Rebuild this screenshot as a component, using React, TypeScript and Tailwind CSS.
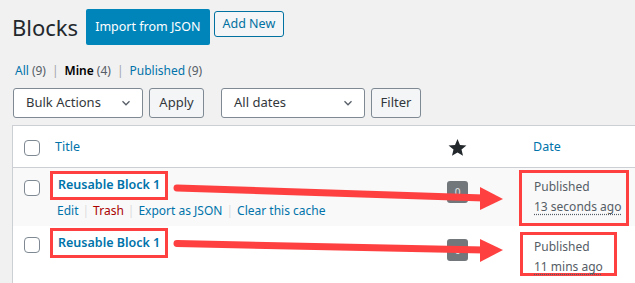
import React from "react";

const Chevron = () => (
  <svg width="14" height="14" viewBox="0 0 20 20" className="text-[#555d66]">
    <path d="M5 7.5l5 5 5-5" fill="none" stroke="currentColor" strokeWidth="1.8" />
  </svg>
);

const Checkbox = () => (
  <div className="w-4 h-4 border border-[#7e8993] rounded-[4px] bg-white" />
);

const Star = () => (
  <svg width="19" height="19" viewBox="0 0 20 20">
    <path
      d="M10 1l2.6 6.3 6.8.5-5.2 4.4 1.6 6.6L10 15.2l-5.8 3.6 1.6-6.6L.6 7.8l6.8-.5z"
      fill="#23282d"
    />
  </svg>
);

const Badge = () => (
  <div className="w-[21px] h-[22px] rounded-[3px] bg-[#72777c] text-[#e5e5e5] text-[10px] flex items-center justify-center">
    0
  </div>
);

export default function App() {
  return (
    <div
      className="relative w-[635px] h-[283px] overflow-hidden bg-[#f1f1f1] text-[#23282d]"
      style={{ fontFamily: '"Noto Sans", "Open Sans", sans-serif' }}
    >
      {/* heading */}
      <div className="flex items-start pl-[12px] pt-[9px]">
        <h1 className="text-[22px] leading-[32px] mt-[2px] text-[#23282d]">Blocks</h1>
        <div className="ml-[8px] h-[36px] px-[9px] flex items-center bg-[#0085ba] text-white text-[12.5px] rounded-[2px]">
          Import from JSON
        </div>
        <div className="ml-[4px] mt-[2px] h-[26px] px-[8px] flex items-center border border-[#0071a1] bg-[#f3f5f6] text-[#0071a1] text-[12.5px] rounded-[3px]">
          Add New
        </div>
      </div>

      {/* subsubsub */}
      <div className="flex items-center pl-[15px] mt-[17px] h-[18px] text-[12px] leading-[18px]">
        <span className="text-[#0073aa]">All</span>
        <span className="text-[#555d66] ml-[3px]">(9)</span>
        <span className="text-[#a0a5aa] mx-[6px]">|</span>
        <span className="font-semibold text-black">Mine</span>
        <span className="text-[#555d66] ml-[3px]">(4)</span>
        <span className="text-[#a0a5aa] mx-[6px]">|</span>
        <span className="text-[#0073aa]">Published</span>
        <span className="text-[#555d66] ml-[3px]">(9)</span>
      </div>

      {/* tablenav */}
      <div className="flex items-center pl-[13px] mt-[8px] h-[30px] text-[13px] text-[#32373c]">
        <div className="w-[130px] h-[30px] bg-white border border-[#7e8993] rounded-[3px] flex items-center justify-between pl-[12px] pr-[9px]">
          <span>Bulk Actions</span>
          <Chevron />
        </div>
        <div className="ml-[6px] w-[55px] h-[30px] bg-[#f3f5f6] border border-[#7e8993] rounded-[3px] flex items-center justify-center">
          Apply
        </div>
        <div className="ml-[17px] w-[144px] h-[30px] bg-white border border-[#7e8993] rounded-[3px] flex items-center justify-between pl-[12px] pr-[9px]">
          <span>All dates</span>
          <Chevron />
        </div>
        <div className="ml-[6px] w-[50px] h-[30px] bg-[#f3f5f6] border border-[#7e8993] rounded-[3px] flex items-center justify-center">
          Filter
        </div>
      </div>

      {/* table */}
      <div className="ml-[12px] mt-[7px] w-[640px] border border-[#ccd0d4] bg-white text-[12.5px]">
        {/* header */}
        <div className="grid grid-cols-[34px_363px_95px_1fr] h-[42px] pt-[2px] items-center border-b border-[#ccd0d4]">
          <div className="pl-[11px]">
            <Checkbox />
          </div>
          <div className="pl-[8px] text-[#0073aa]">Title</div>
          <div className="flex justify-center">
            <Star />
          </div>
          <div className="pl-[28px] text-[#0073aa]">Date</div>
        </div>

        {/* row 1 */}
        <div className="grid grid-cols-[34px_363px_95px_1fr] h-[58px] bg-[#f9f9f9] items-start">
          <div className="pl-[11px] pt-[12px]">
            <Checkbox />
          </div>
          <div className="pt-[3px] pl-[3px]">
            <div className="inline-flex h-[29px] items-center border-[3px] border-[#ff4040] px-[5px] bg-white font-semibold text-[#0073aa]">
              Reusable Block 1
            </div>
            <div className="flex items-center h-[18px] mt-[2px] pl-[7px] text-[12px] text-[#0073aa]">
              <span>Edit</span>
              <span className="text-[#ddd] mx-[4px]">|</span>
              <span className="text-[#a00]">Trash</span>
              <span className="text-[#ddd] mx-[4px]">|</span>
              <span>Export as JSON</span>
              <span className="text-[#ddd] mx-[4px]">|</span>
              <span>Clear this cache</span>
            </div>
          </div>
          <div className="flex justify-center pt-[13px]">
            <Badge />
          </div>
          <div className="pt-[2px] pl-[14px]">
            <div className="w-[110px] h-[56px] border-[3px] border-[#ff4040] pl-[12px] pt-[4px] text-[#555d66] text-[12px] leading-[20px] bg-[#f9f9f9]">
              <div>Published</div>
              <div className="underline decoration-dotted underline-offset-[3px] whitespace-nowrap">13 seconds ago</div>
            </div>
          </div>
        </div>

        {/* row 2 */}
        <div className="grid grid-cols-[34px_363px_95px_1fr] h-[60px] bg-white items-start">
          <div className="pl-[11px] pt-[11px]">
            <Checkbox />
          </div>
          <div className="pt-[2px] pl-[3px]">
            <div className="inline-flex h-[30px] items-center border-[3px] border-[#ff4040] px-[5px] font-semibold text-[#0073aa]">
              Reusable Block 1
            </div>
          </div>
          <div className="flex justify-center pt-[13px]">
            <Badge />
          </div>
          <div className="pt-[6px] pl-[15px]">
            <div className="w-[97px] h-[44px] border-[3px] border-[#ff4040] pl-[11px] pt-[2px] text-[#555d66] text-[12px] leading-[20px]">
              <div>Published</div>
              <div className="underline decoration-dotted underline-offset-[3px] whitespace-nowrap">11 mins ago</div>
            </div>
          </div>
        </div>
      </div>

      {/* annotation arrows */}
      <svg className="absolute inset-0 pointer-events-none" width="635" height="283">
        <line x1="177" y1="188" x2="484" y2="198" stroke="#ff4040" strokeWidth="7" strokeLinecap="round" />
        <polygon points="480,187 503,199 480,210" fill="#ff4040" />
        <line x1="177" y1="243.5" x2="484" y2="250" stroke="#ff4040" strokeWidth="7" strokeLinecap="round" />
        <polygon points="480,239 503,250 480,262" fill="#ff4040" />
      </svg>
    </div>
  );
}
